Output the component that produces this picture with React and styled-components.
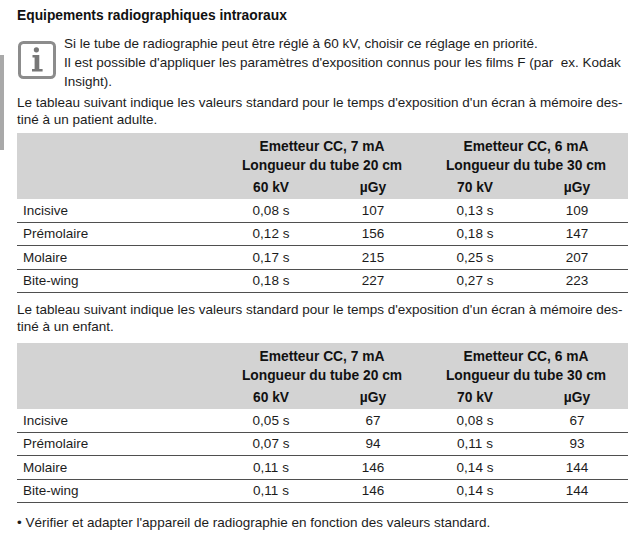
import styled, { createGlobalStyle } from "styled-components";

const GlobalStyle = createGlobalStyle`
  body {
    margin: 0;
    background: #fff;
    font-family: "Liberation Sans", Arial, sans-serif;
    color: #1c1c1c;
  }
`;

const adult = [
  ["Incisive", "0,08 s", "107", "0,13 s", "109"],
  ["Prémolaire", "0,12 s", "156", "0,18 s", "147"],
  ["Molaire", "0,17 s", "215", "0,25 s", "207"],
  ["Bite-wing", "0,18 s", "227", "0,27 s", "223"],
];

const child = [
  ["Incisive", "0,05 s", "67", "0,08 s", "67"],
  ["Prémolaire", "0,07 s", "94", "0,11 s", "93"],
  ["Molaire", "0,11 s", "146", "0,14 s", "144"],
  ["Bite-wing", "0,11 s", "146", "0,14 s", "144"],
];

function InfoIcon() {
  return (
    <svg width="38" height="38" viewBox="0 0 38 38">
      <rect x="1.5" y="1.5" width="35" height="35" rx="4" fill="#fff" stroke="#8c8c8c" strokeWidth="3" />
      <circle cx="18.4" cy="8.8" r="2.6" fill="#777" />
      <path d="M14.5 14 H21.3 V28 H24.6 V30.5 H14 V28 H16.6 V16.4 H14.5 Z" fill="#777" />
    </svg>
  );
}

function ExposureTable({ rows, top }) {
  return (
    <Table $top={top}>
      <colgroup>
        <col style={{ width: 203 }} />
        <col style={{ width: 102 }} />
        <col style={{ width: 102 }} />
        <col style={{ width: 102 }} />
        <col style={{ width: 102 }} />
      </colgroup>
      <thead>
        <HeadRow $h={24} $pt={3}>
          <th />
          <th colSpan={2}>Emetteur CC, 7 mA</th>
          <th colSpan={2}>Emetteur CC, 6 mA</th>
        </HeadRow>
        <HeadRow $h={19} $pb={2}>
          <th />
          <th colSpan={2}>Longueur du tube 20 cm</th>
          <th colSpan={2}>Longueur du tube 30 cm</th>
        </HeadRow>
        <HeadRow $h={22.5}>
          <th />
          <th>60 kV</th>
          <th>µGy</th>
          <th>70 kV</th>
          <th>µGy</th>
        </HeadRow>
      </thead>
      <tbody>
        {rows.map((r) => (
          <BodyRow key={r[0]}>
            <LabelCell>{r[0]}</LabelCell>
            {r.slice(1).map((v, i) => (
              <td key={i}>{v}</td>
            ))}
          </BodyRow>
        ))}
      </tbody>
    </Table>
  );
}

export default function App() {
  return (
    <>
      <GlobalStyle />
      <Page>
        <Margin>
          <Tab />
        </Margin>
        <Content>
          <Title>Equipements radiographiques intraoraux</Title>
          <Info>
            <IconBox>
              <InfoIcon />
            </IconBox>
            <InfoText>
              Si le tube de radiographie peut être réglé à 60 kV, choisir ce réglage en priorité.
              <br />
              Il est possible d'appliquer les paramètres d'exposition connus pour les films F (par&nbsp; ex. Kodak
              <br />
              Insight).
            </InfoText>
          </Info>
          <Para $top={3}>
            Le tableau suivant indique les valeurs standard pour le temps d'exposition d'un écran à mémoire des-
            <br />
            tiné à un patient adulte.
          </Para>
          <ExposureTable rows={adult} top={5} />
          <Para $top={8}>
            Le tableau suivant indique les valeurs standard pour le temps d'exposition d'un écran à mémoire des-
            <br />
            tiné à un enfant.
          </Para>
          <ExposureTable rows={child} top={8} />
          <Bullet>• Vérifier et adapter l'appareil de radiographie en fonction des valeurs standard.</Bullet>
        </Content>
      </Page>
    </>
  );
}

const Page = styled.div`
  display: flex;
  width: 640px;
  height: 540px;
  overflow: hidden;
`;

const Margin = styled.div`
  width: 4px;
  flex-shrink: 0;
`;

const Tab = styled.div`
  margin-top: 55px;
  height: 95px;
  background: #a9a9a9;
`;

const Content = styled.div`
  padding: 8px 0 0 13px;
  width: 611px;
`;

const Title = styled.div`
  font-size: 13.8px;
  font-weight: bold;
  line-height: 16px;
  color: #111;
`;

const Info = styled.div`
  display: flex;
  align-items: flex-start;
  gap: 8px;
  margin-top: 10px;
  margin-left: 1px;
`;

const IconBox = styled.div`
  width: 38px;
  height: 38px;
  margin-top: 7px;
  flex-shrink: 0;
`;

const InfoText = styled.div`
  font-size: 13.5px;
  line-height: 19px;
  white-space: nowrap;
`;

const Para = styled.div`
  margin-top: ${(p) => p.$top}px;
  font-size: 13.5px;
  line-height: 17px;
  white-space: nowrap;
`;

const Table = styled.table`
  margin-top: ${(p) => p.$top}px;
  width: 611px;
  table-layout: fixed;
  border-collapse: collapse;
  font-size: 13.5px;

  thead {
    background: #d3d3d3;
  }

  td {
    text-align: center;
    padding: 0;
  }
`;

const HeadRow = styled.tr`
  height: ${(p) => p.$h}px;

  th {
    padding: ${(p) => p.$pt || 0}px 0 ${(p) => p.$pb || 0}px;
    font-size: 13.8px;
    font-weight: bold;
    text-align: center;
    color: #111;
  }
`;

const BodyRow = styled.tr`
  height: 23.5px;
  border-bottom: 1.5px solid #4f4f4f;
`;

const LabelCell = styled.td`
  && {
    text-align: left;
    padding-left: 6px;
  }
`;

const Bullet = styled.div`
  margin-top: 11px;
  font-size: 13.5px;
  line-height: 17px;
`;
